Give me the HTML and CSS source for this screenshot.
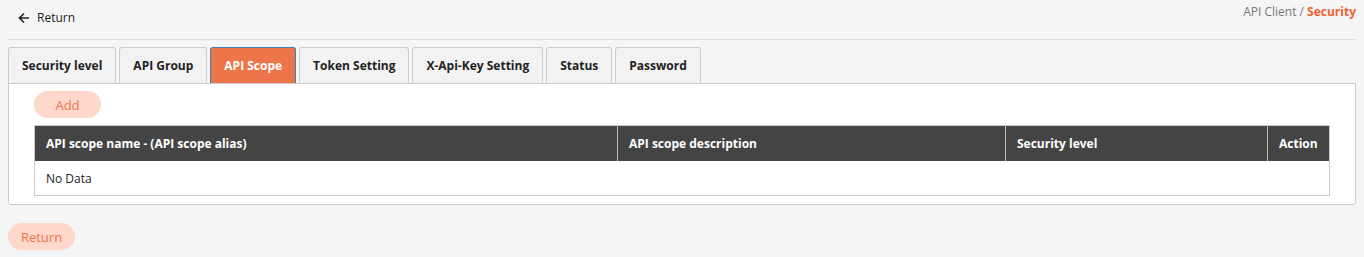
FILE: index.html
```html
<!DOCTYPE html>
<html lang="en">
<head>
    <meta charset="UTF-8">
    <title>API Client - Security</title>
    <link rel="stylesheet" href="styles.css">
</head>
<body>
    <div class="topbar">
        <a class="back-link" href="#">
            <svg width="12" height="12" viewBox="0 0 12 12"><path d="M11 6H2M6 1.5L1.5 6 6 10.5" fill="none" stroke="#222" stroke-width="1.6"/></svg>
            <span>Return</span>
        </a>
        <div class="breadcrumb">API Client / <span class="current">Security</span></div>
    </div>
    <div class="tabs">
        <div class="tab">Security level</div>
        <div class="tab">API Group</div>
        <div class="tab active">API Scope</div>
        <div class="tab">Token Setting</div>
        <div class="tab">X-Api-Key Setting</div>
        <div class="tab">Status</div>
        <div class="tab">Password</div>
    </div>
    <div class="panel">
        <button class="pill-btn">Add</button>
        <table class="data-table">
            <colgroup>
                <col style="width: 583px">
                <col style="width: 388px">
                <col style="width: 262px">
                <col>
            </colgroup>
            <thead>
                <tr>
                    <th>API scope name - (API scope alias)</th>
                    <th>API scope description</th>
                    <th>Security level</th>
                    <th>Action</th>
                </tr>
            </thead>
            <tbody>
                <tr>
                    <td colspan="4">No Data</td>
                </tr>
            </tbody>
        </table>
    </div>
    <button class="pill-btn return-btn">Return</button>
</body>
</html>
```

FILE: styles.css
```css
body {
    font-family: 'Open Sans', sans-serif;
    font-size: 12px;
    color: #222;
    background-color: #f5f5f5;
    margin: 0;
    padding: 0 8px;
}
.topbar {
    display: flex;
    justify-content: space-between;
    align-items: flex-start;
    height: 39px;
    border-bottom: 1px solid #ddd;
}
.back-link {
    display: flex;
    align-items: center;
    gap: 7px;
    margin: 9px 0 0 10px;
    color: #222;
    text-decoration: none;
}
.breadcrumb {
    margin-top: 3px;
    color: #777;
}
.breadcrumb .current {
    color: #f2622e;
    font-weight: bold;
}
.tabs {
    display: flex;
    gap: 3px;
    margin-top: 7px;
}
.tab {
    height: 35px;
    line-height: 35px;
    padding: 0 13px;
    background: #f2f2f2;
    border: 1px solid #ccc;
    border-bottom: none;
    border-radius: 3px 3px 0 0;
    font-weight: bold;
    color: #222;
}
.tab.active {
    background: #ec7649;
    border-color: #3f7dbd;
    color: #fff;
}
.panel {
    background: #fff;
    border: 1px solid #ccc;
    border-radius: 0 0 3px 3px;
    padding: 7px 25px 8px;
}
.pill-btn {
    display: block;
    width: 67px;
    height: 27px;
    padding: 0;
    border: none;
    border-radius: 14px;
    background: #fdd8cb;
    color: #f0714a;
    font-family: inherit;
    font-size: 13px;
    text-align: center;
    cursor: pointer;
}
.data-table {
    width: 100%;
    margin-top: 7px;
    border-collapse: collapse;
    border: 1px solid #ccc;
    table-layout: fixed;
}
.data-table th {
    height: 35px;
    padding: 0 11px;
    background: #444;
    color: #fff;
    text-align: left;
    font-weight: bold;
    border-left: 1px solid #bbb;
}
.data-table th:first-child {
    border-left: none;
}
.data-table td {
    height: 34px;
    padding: 0 11px;
}
.return-btn {
    margin-top: 18px;
}
```
